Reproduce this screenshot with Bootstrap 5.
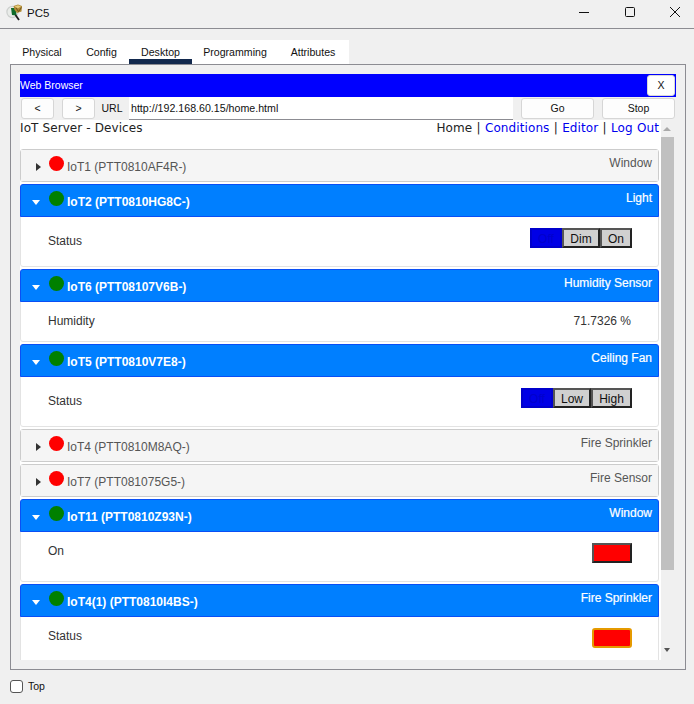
<!DOCTYPE html>
<html lang="en">
<head>
<meta charset="utf-8">
<title>PC5</title>
<link href="https://cdn.jsdelivr.net/npm/bootstrap@5.3.0/dist/css/bootstrap.min.css" rel="stylesheet">
<style>
html,body{height:704px;overflow:hidden}
body{background:#f0f0f0;font-family:"Liberation Sans",Arial,sans-serif;font-size:12px;color:#212529}
.win-title{height:29px;border-bottom:1px solid #8c8c92;padding-left:6px}
.win-icon{margin-top:-3px}
.win-name{font-size:11.5px;color:#111;margin-left:4px;margin-top:-1px}
.win-ctls{gap:33.5px;padding-right:13px;margin-bottom:4px}
.tab-strip{margin:11px 0 0 10px;width:339px;height:24px;background:#fff}
.tab-one{font-size:10.6px;color:#111;height:24px;line-height:24px;text-align:center;white-space:nowrap}
.tw-a{width:64px}
.tw-b{width:55px}
.tw-c{width:63px}
.tw-d{width:86px}
.tw-e{width:70px}
.tab-on{border-bottom:5px solid #12294e}
.panel-box{margin-left:10px;width:676px;height:606px;border:1px solid #8c8c92;padding:9px}
.blue-bar{height:23px;background:#0000ff;color:#fff;font-size:10.5px}
.close-x{width:28px;height:21px;font-size:10.5px;color:#111;background:#fff;border:1px solid #d8d8d8;border-radius:3px;margin-right:1px;padding:0;line-height:19px}
.url-row{height:23px}
.nav-btn{height:21px;background:#fdfdfd;border:1px solid #d6d6d6;border-radius:3px;font-size:10.5px;color:#111;padding:0;line-height:19px}
.nav-back{width:33px;margin-left:1px}
.nav-fwd{width:33px;margin-left:8px}
.url-lab{width:34px;text-align:center;font-size:10.5px;color:#111}
.url-box{width:384px;height:23px;background:#fff;border-bottom:1px solid #8c8c92;font-size:10.65px;line-height:23px;padding-left:2px;color:#111}
.go-btn{width:73px;margin-left:8px}
.stop-btn{width:73px;margin-left:8px}
.web-area{height:540px;background:#fff;width:656px;overflow:hidden}
.web-main{width:641px;height:540px;overflow:hidden}
.page-head{height:29px;font-family:"DejaVu Sans",sans-serif;font-size:12px;color:#222;line-height:17px;letter-spacing:.1px}
.page-links a{color:#0000ee;text-decoration:none}
.page-links{padding-right:2px;white-space:nowrap;word-spacing:.35px}
.sep-bar{color:#222}
.dev-box{width:639px;margin-bottom:2px;border:1px solid #ccc;border-radius:3px;background:#fff;font-size:12px}
.dev-head{height:31px;background:#f5f5f5;color:#555;position:relative}
.dev-open.dev-box{border-color:#e3e3e3}
.dev-open .dev-head{background:#007fff;color:#fff;margin:-1px;width:639px;height:33px;border:1px solid #0a4ff5;border-radius:3px 3px 0 0;box-sizing:border-box}
.dev-open .dev-name{font-weight:700}
.dev-open .dev-kind{-webkit-text-stroke:.2px #fff}
.tri-r{width:0;height:0;border-top:4px solid transparent;border-bottom:4px solid transparent;border-left:5px solid #333;margin-left:15px;margin-right:8px;margin-top:3px}
.tri-d{width:0;height:0;border-left:4.5px solid transparent;border-right:4.5px solid transparent;border-top:5px solid #fff;margin-left:11px;margin-right:9px;margin-top:3px}
.led{width:15px;height:15px;border-radius:50%;margin-top:-5px;margin-right:3px;flex:none}
.led-r{background:#ff0000}
.led-g{background:#008000}
.dev-name{font-size:12px;margin-top:3px}
.dev-kind{position:absolute;right:6px;top:4px;font-size:12px}
.dev-body{height:50px;padding:0 26px 0 27px;color:#333}
.dev-short{height:40px;padding-right:27px}
.body-lab{margin-top:17px;line-height:16px}
.body-top{margin-top:12px}
.sw{height:20px;font-size:12px;line-height:18px;padding:0;background:#d0d0d0;border:2px solid;border-color:#555 #222 #222 #555;color:#111;text-align:center}
.sw-off{background:#0000e6;color:#0000cc;width:32px;border-color:#0000cc}
.sw-dim{width:38px}
.sw-on{width:32px}
.sw-low{width:38px}
.sw-high{width:41px}
.sw-red{width:40px;height:20px;background:#ff0000;border:2px solid;border-color:#555 #222 #222 #555}
.sw-focus{border-color:#e59a00;border-radius:3px}
.ctl-row{margin-top:12px}
.hum-val{margin-top:12px;line-height:16px;color:#333}
.scroll-col{width:15px;height:540px;position:relative;background:#f0f0f0}
.scroll-thumb{position:absolute;left:0;top:17px;width:13px;height:433px;background:#c0c0c0}
.arr-up{position:absolute;left:2px;top:7px;width:0;height:0;border-left:4px solid transparent;border-right:4px solid transparent;border-bottom:4px solid #aaa}
.arr-dn{position:absolute;left:3px;top:528px;width:0;height:0;border-left:3.5px solid transparent;border-right:3.5px solid transparent;border-top:4px solid #555}
.foot-row{margin:9px 0 0 10px;font-size:10.5px;color:#111}
.top-box{width:13px;height:13px;border:1px solid #555;border-radius:3px;background:#fff;margin-right:5px}
</style>
</head>
<body>
<div class="win-title d-flex align-items-center">
  <svg class="win-icon" width="17" height="17" viewBox="0 0 17 17">
    <circle cx="6.5" cy="8" r="5.6" fill="#e9ece9" stroke="#cdd0ce" stroke-width="1.2"/>
    <path d="M5 4 L10 4 L10.5 11.5 L6 11 Z" fill="#0f6b2a"/>
    <path d="M7.5 2 L12 0.5 L16 2 L15.5 7.5 L11 9 L8.5 6 Z" fill="#b08a35"/>
    <path d="M8.5 2.5 L12 1.2 L15 2.5 L12 4.2 Z" fill="#e6cb7c"/>
    <path d="M10 4 L12.5 7.5 M15.5 3.5 L12.5 7.5" stroke="#5a4517" stroke-width=".8" fill="none"/>
    <path d="M9.5 11 L13 16" stroke="#1c1c1c" stroke-width="1.8"/>
  </svg>
  <span class="win-name">PC5</span>
  <div class="win-ctls ms-auto d-flex">
    <svg width="12" height="12" viewBox="0 0 12 12"><path d="M1 6.5H11" stroke="#111" stroke-width="1"/></svg>
    <svg width="12" height="12" viewBox="0 0 12 12"><rect x="1.5" y="1.5" width="9" height="9" rx="1" fill="none" stroke="#111" stroke-width="1"/></svg>
    <svg width="12" height="12" viewBox="0 0 12 12"><path d="M1 1L11 11M11 1L1 11" stroke="#111" stroke-width="1"/></svg>
  </div>
</div>
<div class="tab-strip d-flex">
  <div class="tab-one tw-a">Physical</div>
  <div class="tab-one tw-b">Config</div>
  <div class="tab-one tw-c tab-on">Desktop</div>
  <div class="tab-one tw-d">Programming</div>
  <div class="tab-one tw-e">Attributes</div>
</div>
<div class="panel-box">
  <div class="blue-bar d-flex align-items-center justify-content-between">
    <span>Web Browser</span>
    <button class="close-x" type="button">X</button>
  </div>
  <div class="url-row d-flex align-items-center">
    <button class="nav-btn nav-back" type="button">&lt;</button>
    <button class="nav-btn nav-fwd" type="button">&gt;</button>
    <div class="url-lab">URL</div>
    <div class="url-box">http://192.168.60.15/home.html</div>
    <button class="nav-btn go-btn" type="button">Go</button>
    <button class="nav-btn stop-btn" type="button">Stop</button>
  </div>
  <div class="web-area d-flex">
    <div class="web-main">
      <div class="page-head d-flex justify-content-between">
        <span>IoT Server - Devices</span>
        <span class="page-links">Home <span class="sep-bar">|</span> <a href="#">Conditions</a> <span class="sep-bar">|</span> <a href="#">Editor</a> <span class="sep-bar">|</span> <a href="#">Log Out</a></span>
      </div>
      <div class="dev-box"><div class="dev-head d-flex align-items-center"><span class="tri-r"></span><span class="led led-r"></span><span class="dev-name">IoT1 (PTT0810AF4R-)</span><span class="dev-kind">Window</span></div></div>
      <div class="dev-box dev-open"><div class="dev-head d-flex align-items-center"><span class="tri-d"></span><span class="led led-g"></span><span class="dev-name">IoT2 (PTT0810HG8C-)</span><span class="dev-kind">Light</span></div>
        <div class="dev-body d-flex justify-content-between"><div class="body-lab">Status</div><div class="ctl-row d-flex align-items-start"><div class="sw sw-off">Off</div><div class="sw sw-dim">Dim</div><div class="sw sw-on">On</div></div></div></div>
      <div class="dev-box dev-open"><div class="dev-head d-flex align-items-center"><span class="tri-d"></span><span class="led led-g"></span><span class="dev-name">IoT6 (PTT08107V6B-)</span><span class="dev-kind">Humidity Sensor</span></div>
        <div class="dev-body dev-short d-flex justify-content-between"><div class="body-lab body-top">Humidity</div><div class="hum-val">71.7326 %</div></div></div>
      <div class="dev-box dev-open"><div class="dev-head d-flex align-items-center"><span class="tri-d"></span><span class="led led-g"></span><span class="dev-name">IoT5 (PTT0810V7E8-)</span><span class="dev-kind">Ceiling Fan</span></div>
        <div class="dev-body d-flex justify-content-between"><div class="body-lab">Status</div><div class="ctl-row d-flex align-items-start"><div class="sw sw-off">Off</div><div class="sw sw-low">Low</div><div class="sw sw-high">High</div></div></div></div>
      <div class="dev-box"><div class="dev-head d-flex align-items-center"><span class="tri-r"></span><span class="led led-r"></span><span class="dev-name">IoT4 (PTT0810M8AQ-)</span><span class="dev-kind">Fire Sprinkler</span></div></div>
      <div class="dev-box"><div class="dev-head d-flex align-items-center"><span class="tri-r"></span><span class="led led-r"></span><span class="dev-name">IoT7 (PTT081075G5-)</span><span class="dev-kind">Fire Sensor</span></div></div>
      <div class="dev-box dev-open"><div class="dev-head d-flex align-items-center"><span class="tri-d"></span><span class="led led-g"></span><span class="dev-name">IoT11 (PTT0810Z93N-)</span><span class="dev-kind">Window</span></div>
        <div class="dev-body d-flex justify-content-between"><div class="body-lab body-top">On</div><div class="ctl-row"><div class="sw-red"></div></div></div></div>
      <div class="dev-box dev-open"><div class="dev-head d-flex align-items-center"><span class="tri-d"></span><span class="led led-g"></span><span class="dev-name">IoT4(1) (PTT0810I4BS-)</span><span class="dev-kind">Fire Sprinkler</span></div>
        <div class="dev-body d-flex justify-content-between"><div class="body-lab body-top">Status</div><div class="ctl-row"><div class="sw-red sw-focus"></div></div></div></div>
    </div>
    <div class="scroll-col"><span class="arr-up"></span><div class="scroll-thumb"></div><span class="arr-dn"></span></div>
  </div>
</div>
<div class="foot-row d-flex align-items-center"><span class="top-box"></span>Top</div>
</body>
</html>
